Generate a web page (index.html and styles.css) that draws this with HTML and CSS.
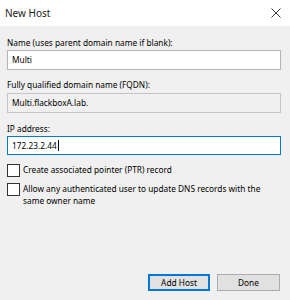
FILE: index.html
```html
<!DOCTYPE html>
<html lang="en">
<head>
    <meta charset="UTF-8">
    <meta name="viewport" content="width=device-width, initial-scale=1.0">
    <title>New Host</title>
    <link rel="stylesheet" href="styles.css">
</head>
<body>
    <div class="dialog">
        <div class="titlebar">
            <span class="title">New Host</span>
            <svg class="close" width="10" height="10" viewBox="0 0 10 10">
                <path d="M0.5 0.5 L9.5 9.5 M9.5 0.5 L0.5 9.5" stroke="#333" stroke-width="1" fill="none"/>
            </svg>
        </div>

        <div class="content">
            <div class="label">Name (uses parent domain name if blank):</div>
            <div class="field">Multi</div>

            <div class="label label-fqdn">Fully qualified domain name (FQDN):</div>
            <div class="field readonly">Multi.flackboxA.lab.</div>

            <div class="label label-ip">IP address:</div>
            <div class="field focused">172.23.2.44<span class="caret"></span></div>

            <label class="check check-first">
                <span class="box"></span>
                <span>Create associated pointer (PTR) record</span>
            </label>
            <label class="check check-second">
                <span class="box"></span>
                <span>Allow any authenticated user to update DNS records with the same owner name</span>
            </label>
        </div>

        <div class="buttons">
            <button class="btn default-btn">Add Host</button>
            <button class="btn">Done</button>
        </div>
    </div>
</body>
</html>
```

FILE: styles.css
```css
body {
    margin: 0;
    font-family: 'Noto Sans', 'Open Sans', sans-serif;
    font-size: 8.3px;
    color: #000;
    background: #f0f0f0;
}
.dialog {
    display: flex;
    flex-direction: column;
    min-height: 100vh;
}
.titlebar {
    height: 26px;
    background: #fff;
    display: flex;
    align-items: center;
    justify-content: space-between;
    padding: 0 9px 0 5px;
}
.title {
    font-size: 10px;
    color: #222;
}
.close {
    display: block;
}
.content {
    padding: 10px 9px 0 7px;
}
.label {
    height: 14px;
    line-height: 14px;
}
.label-fqdn {
    margin-top: 8px;
    margin-bottom: 1px;
}
.label-ip {
    margin-top: 9px;
}
.field {
    height: 20px;
    box-sizing: border-box;
    border: 1px solid #b4b4b4;
    background: #fff;
    padding: 0 4px;
    line-height: 18px;
    display: flex;
    align-items: center;
}
.readonly {
    background: #f0f0f0;
    border-color: #c4c4c4;
}
.focused {
    border-color: #0078d7;
    height: 19px;
}
.caret {
    display: inline-block;
    width: 1px;
    height: 11px;
    background: #000;
    margin-left: 1px;
}
.check {
    display: flex;
    align-items: flex-start;
    gap: 3px;
    line-height: 12px;
}
.check-first {
    margin-top: 9px;
}
.check-second {
    margin-top: 6px;
}
.box {
    flex: none;
    width: 11px;
    height: 11px;
    border: 1px solid #333;
    background: #fff;
}
.buttons {
    margin-top: auto;
    display: flex;
    justify-content: flex-end;
    gap: 7px;
    padding: 0 10px 9px 0;
}
.btn {
    width: 63px;
    height: 17px;
    box-sizing: border-box;
    padding: 0;
    font-family: inherit;
    font-size: 8.3px;
    background: #e1e1e1;
    border: 1px solid #adadad;
    color: #000;
}
.default-btn {
    width: 62px;
    border: 2px solid #0078d7;
}
```
